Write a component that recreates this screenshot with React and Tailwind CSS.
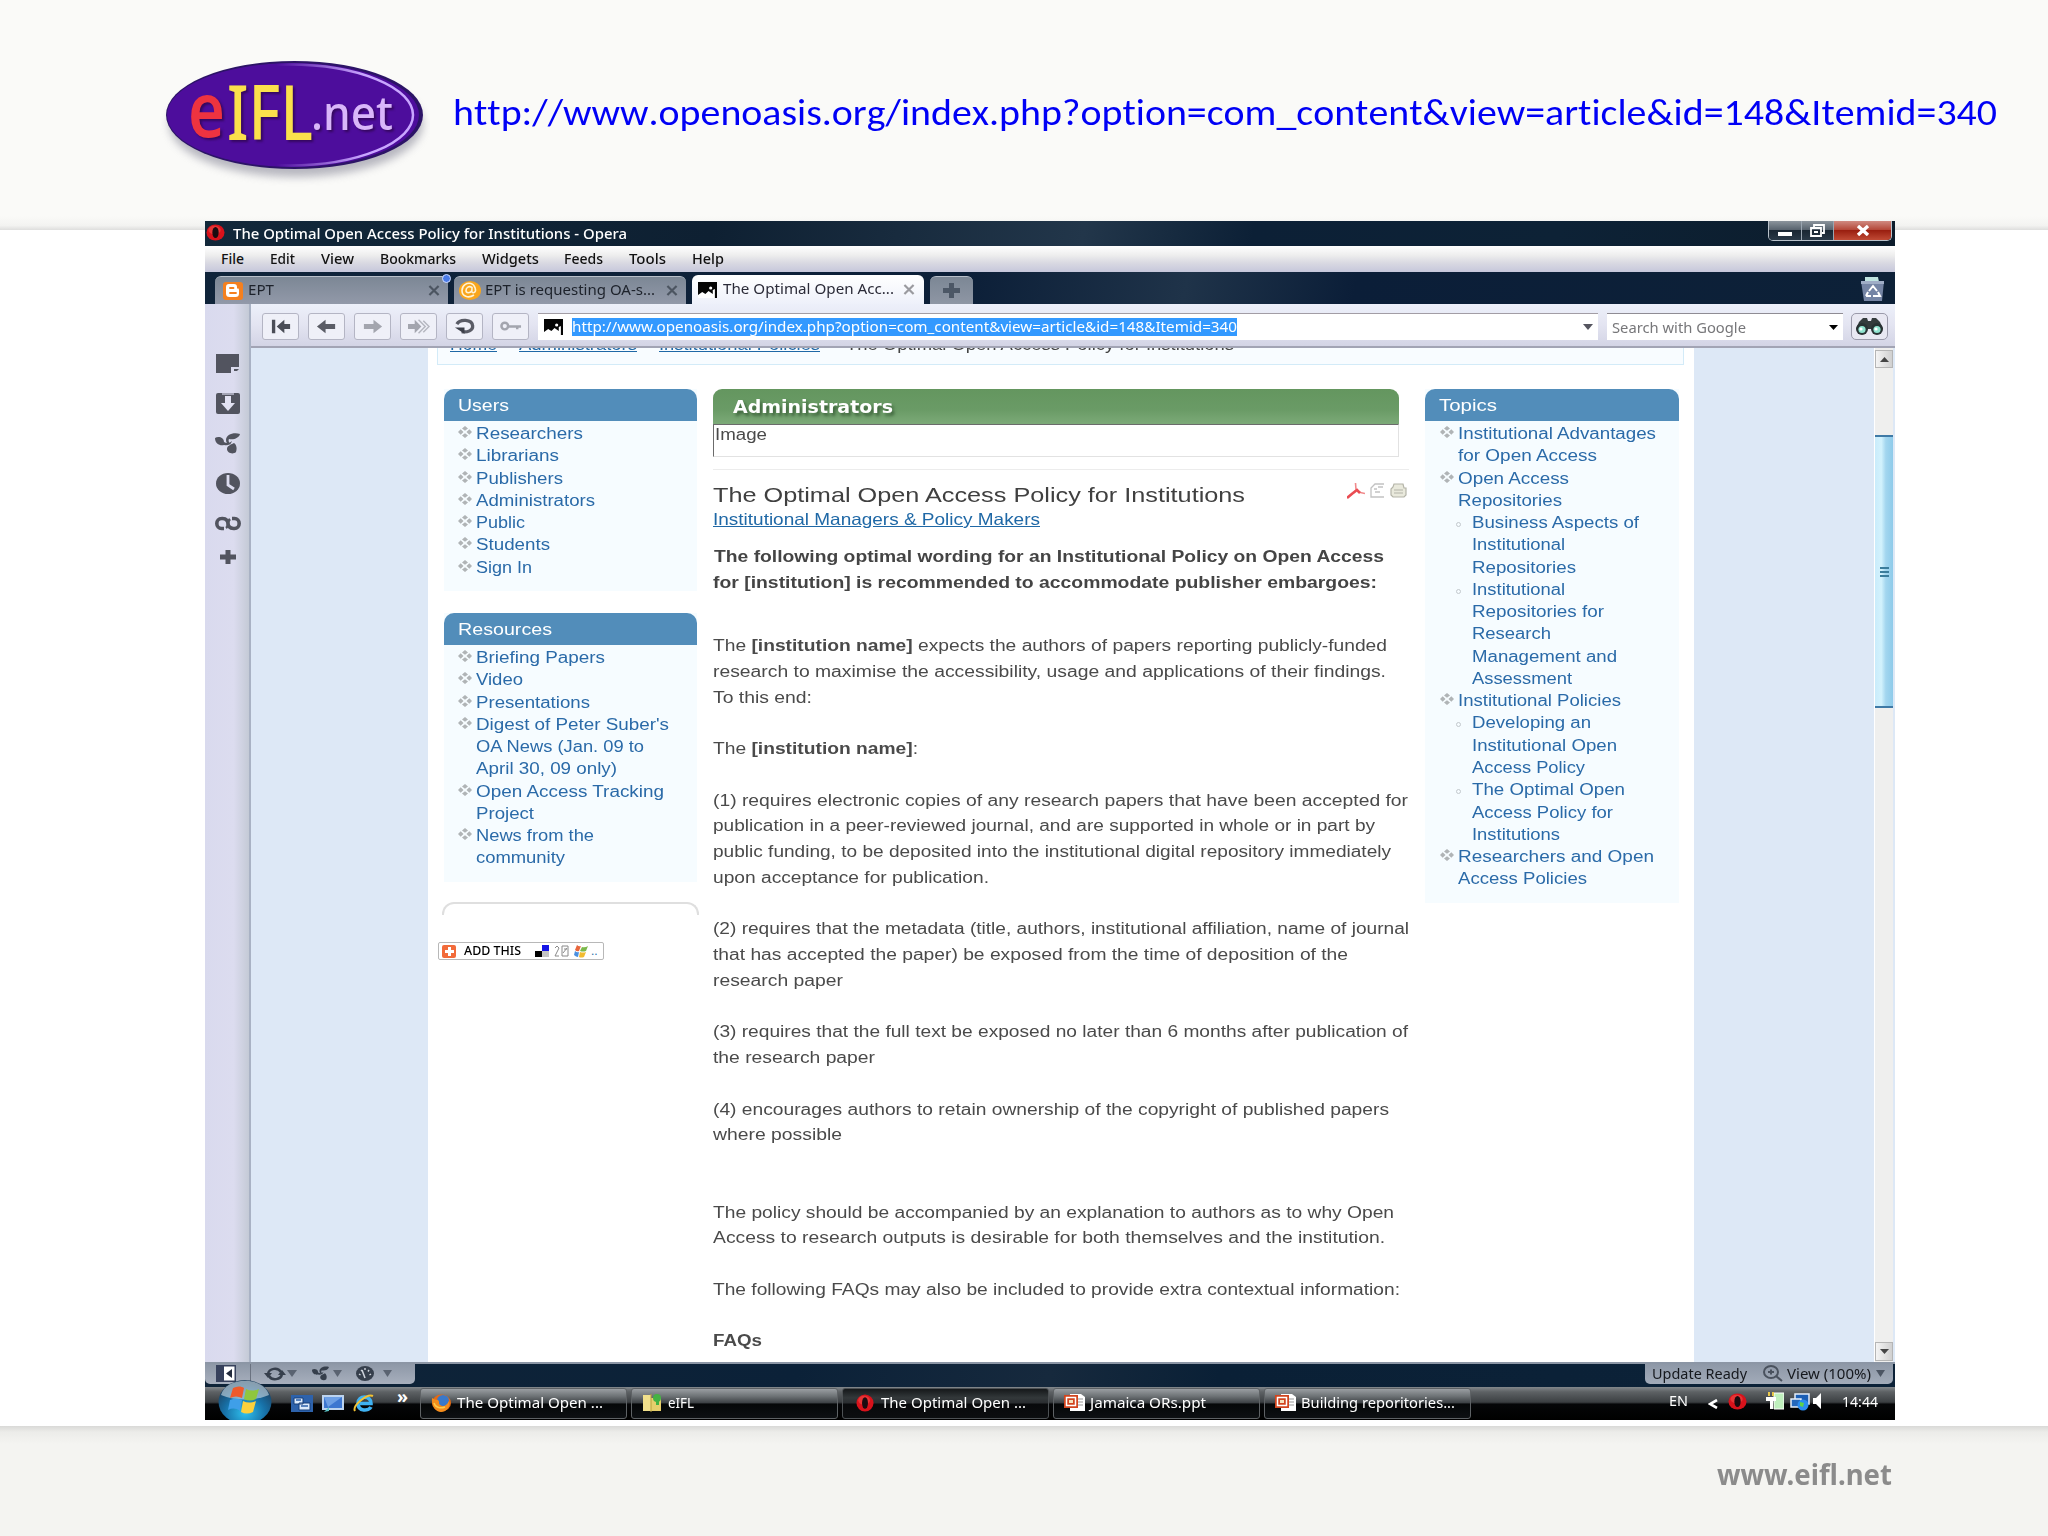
import React, { useLayoutEffect, useRef } from 'react';

// Single line of text stretched horizontally to a fixed width
function Fit({ w, className = '', children }) {
  const ref = useRef(null);

  useLayoutEffect(() => {
    const el = ref.current;
    el.style.transform = 'none';
    const natural = el.getBoundingClientRect().width;
    if (natural > 0) el.style.transform = `scaleX(${w / natural})`;
  }, [w]);

  return (
    <span className={`block shrink-0 ${className}`} style={{ width: w }}>
      <span ref={ref} className="inline-block origin-left whitespace-nowrap align-top">
        {children}
      </span>
    </span>
  );
}

const MENU = [
  ['File', 23, 'ml-4'],
  ['Edit', 25, 'ml-[26px]'],
  ['View', 33, 'ml-[26px]'],
  ['Bookmarks', 76, 'ml-[26px]'],
  ['Widgets', 57, 'ml-[26px]'],
  ['Feeds', 39, 'ml-[25px]'],
  ['Tools', 37, 'ml-[26px]'],
  ['Help', 32, 'ml-[26px]'],
];

// Each item is a list of [line, width]
const USERS = [
  [['Researchers', 107]],
  [['Librarians', 83]],
  [['Publishers', 87]],
  [['Administrators', 119]],
  [['Public', 49]],
  [['Students', 74]],
  [['Sign In', 56]],
];

const RESOURCES = [
  [['Briefing Papers', 129]],
  [['Video', 47]],
  [['Presentations', 114]],
  [["Digest of Peter Suber's", 193], ['OA News (Jan. 09 to', 168], ['April 30, 09 only)', 141]],
  [['Open Access Tracking', 188], ['Project', 58]],
  [['News from the', 118], ['community', 89]],
];

const TOPICS = [
  { lines: [['Institutional Advantages', 198], ['for Open Access', 139]] },
  {
    lines: [['Open Access', 111], ['Repositories', 104]],
    sub: [
      [['Business Aspects of', 167], ['Institutional', 93], ['Repositories', 104]],
      [['Institutional', 93], ['Repositories for', 132], ['Research', 79], ['Management and', 145], ['Assessment', 100]],
    ],
  },
  {
    lines: [['Institutional Policies', 163]],
    sub: [
      [['Developing an', 119], ['Institutional Open', 145], ['Access Policy', 113]],
      [['The Optimal Open', 153], ['Access Policy for', 141], ['Institutions', 88]],
    ],
  },
  { lines: [['Researchers and Open', 196], ['Access Policies', 129]] },
];

const BODY = [
  [<>The <b>[institution name]</b> expects the authors of papers reporting publicly-funded</>, 674],
  ['research to maximise the accessibility, usage and applications of their findings.', 673],
  ['To this end:', 99],
  null,
  [<>The <b>[institution name]</b>:</>, 205],
  null,
  ['(1) requires electronic copies of any research papers that have been accepted for', 695],
  ['publication in a peer-reviewed journal, and are supported in whole or in part by', 662],
  ['public funding, to be deposited into the institutional digital repository immediately', 678],
  ['upon acceptance for publication.', 276],
  null,
  ['(2) requires that the metadata (title, authors, institutional affiliation, name of journal', 696],
  ['that has accepted the paper) be exposed from the time of deposition of the', 635],
  ['research paper', 130],
  null,
  ['(3) requires that the full text be exposed no later than 6 months after publication of', 695],
  ['the research paper', 162],
  null,
  ['(4) encourages authors to retain ownership of the copyright of published papers', 676],
  ['where possible', 129],
  null,
  null,
  ['The policy should be accompanied by an explanation to authors as to why Open', 681],
  ['Access to research outputs is desirable for both themselves and the institution.', 672],
  null,
  ['The following FAQs may also be included to provide extra contextual information:', 687],
  null,
  [<b>FAQs</b>, 49],
];

function Logo() {
  return (
    <svg className="w-[270px] h-[130px] shrink-0" viewBox="0 0 270 130">
      <defs>
        <filter id="soft" x="-10%" y="-10%" width="120%" height="130%">
          <feGaussianBlur stdDeviation="4" />
        </filter>
        <linearGradient id="arc" x1="0.45" x2="0.8" y1="0" y2="0">
          <stop offset="0" stopColor="#c9a6ff" stopOpacity="0" />
          <stop offset="1" stopColor="#c9a6ff" />
        </linearGradient>
      </defs>
      <ellipse cx="136" cy="64" rx="127" ry="53" fill="#8a8a9a" opacity="0.6" filter="url(#soft)" />
      <ellipse cx="134.500" cy="55" rx="128.500" ry="54" fill="#2c1466" />
      <ellipse cx="133" cy="55" rx="126" ry="52" fill="#4d0d9c" />
      <ellipse cx="129" cy="55" rx="124" ry="50.500" fill="none" stroke="url(#arc)" strokeWidth="2.500" />
      <g fontFamily="'Noto Sans', sans-serif" className="[filter:drop-shadow(2px_2px_1px_#35075f)]">
        <text x="28" y="77" fontSize="75" fontWeight="600" fill="#ee3340" textLength="37" lengthAdjust="spacingAndGlyphs">e</text>
        <text x="67" y="80" fontSize="76" fontWeight="500" fill="#fbe04c" textLength="86" lengthAdjust="spacingAndGlyphs">IFL</text>
        <text x="151" y="70" fontSize="48" fontWeight="500" fill="#d9b6fa" textLength="82" lengthAdjust="spacingAndGlyphs">.net</text>
      </g>
    </svg>
  );
}

function OperaIcon({ className }) {
  return (
    <svg className={className} viewBox="0 0 20 20" preserveAspectRatio="none">
      <ellipse cx="10" cy="10" rx="9.500" ry="9.500" fill="#d8121b" />
      <ellipse cx="9" cy="7" rx="6.500" ry="5" fill="#f4564f" opacity="0.5" />
      <ellipse cx="10" cy="10" rx="3.300" ry="6.500" fill="#1a0b10" />
    </svg>
  );
}

function PageIcon({ className }) {
  return (
    <svg className={className} viewBox="0 0 18 16" preserveAspectRatio="none">
      <rect width="18" height="16" fill="#050505" />
      <path d="M0 16V13l4-3 3 2 3-3 4 3V8l2-1v9z" fill="#fff" />
      <circle cx="12" cy="6" r="1.500" fill="#fff" />
    </svg>
  );
}

function CloseX({ className }) {
  return (
    <svg className={className} viewBox="0 0 12 12">
      <path d="M1 1l10 10M11 1L1 11" stroke="currentColor" strokeWidth="2.400" fill="none" />
    </svg>
  );
}

function Caret({ className }) {
  return (
    <svg className={className} viewBox="0 0 10 6" preserveAspectRatio="none">
      <path d="M0 0h10L5 6z" fill="currentColor" />
    </svg>
  );
}

function Bullet() {
  return (
    <svg className="w-[14px] h-3 mt-[3px] mr-1 shrink-0" viewBox="0 0 14 12" fill="#b0b4b6">
      <path d="M7 0l3 2.500-3 2.300-3-2.300zM7 7.200l3 2.300L7 12 4 9.500zM2.700 3.200L5.500 6 2.700 8.800 0 6zM11.300 3.200L14 6l-2.700 2.800L8.500 6z" />
    </svg>
  );
}

function TitleBar() {
  return (
    <div className="h-[25px] flex items-center bg-[linear-gradient(100deg,#12283a_0%,#0e2032_30%,#22364a_52%,#0c2036_62%,#0d2236_80%,#0c1c2b_100%)]">
      <OperaIcon className="w-[19px] h-[17px] ml-px -mt-0.5" />
      <Fit w={394} className="ml-[8px] text-[15px] leading-[25px] text-white font-medium">
        The Optimal Open Access Policy for Institutions - Opera
      </Fit>
      <div className="ml-auto mr-[3px] self-start h-[20px] w-[124px] flex rounded-b-[5px] border border-t-0 border-[#b9c2cb] overflow-hidden">
        <div className="w-[33px] flex items-end justify-center pb-1 border-r border-[#9aa5b0] bg-[linear-gradient(#8b949c_0%,#59646f_45%,#1a2733_50%,#2a3947_100%)]">
          <div className="w-[14px] h-1 bg-white" />
        </div>
        <div className="w-[32px] flex items-center justify-center border-r border-[#9aa5b0] bg-[linear-gradient(#8b949c_0%,#59646f_45%,#1a2733_50%,#2a3947_100%)]">
          <svg className="w-[15px] h-[13px]" viewBox="0 0 15 13" fill="none" stroke="#fff" strokeWidth="1.800">
            <path d="M4 3V1h10v8h-2" />
            <path d="M1 4h10v8H1z" />
            <path d="M4 8h4" />
          </svg>
        </div>
        <div className="flex-1 flex items-center justify-center bg-[linear-gradient(#d08a80_0%,#b5493a_45%,#9a1f10_50%,#c04a35_100%)] text-white">
          <svg className="w-[14px] h-[11px]" viewBox="0 0 14 11" stroke="#fff" strokeWidth="3.400" fill="none">
            <path d="M2 1l10 9M12 1L2 10" />
          </svg>
        </div>
      </div>
    </div>
  );
}

function MenuBar() {
  return (
    <div className="h-[26px] flex items-center text-[14px] leading-[26px] text-[#111] font-medium bg-[linear-gradient(#ffffff_0%,#eeeeee_35%,#d9d9e2_65%,#c6c7db_100%)]">
      {MENU.map(([label, w, margin]) => (
        <Fit key={label} w={w} className={margin}>{label}</Fit>
      ))}
    </div>
  );
}

function TabBar() {
  return (
    <div className="h-[32px] flex items-end text-[14px] leading-[26px] bg-[linear-gradient(100deg,#10243a_0%,#0c1f38_45%,#1f3349_58%,#0b1e38_68%,#0d2138_100%)]">
      <div className="relative ml-[10px] w-[233px] h-[28px] flex items-center rounded-t-[6px] border-t border-[#b9c0ca] bg-[linear-gradient(#7c8795,#9299a9)] text-[#1d222b]">
        <div className="ml-[8px] w-[20px] h-[18px] rounded-[3px] bg-[#f5801f] flex items-center justify-center">
          <svg className="w-[14px] h-[13px]" viewBox="0 0 14 13">
            <path d="M3 0h5a3 3 0 013 3v1.500h1.500L13 6v3.500A3.500 3.500 0 019.500 13h-6A3.500 3.500 0 010 9.500V3a3 3 0 013-3z" fill="#fff" />
            <path d="M4 4h3.500M4 9h6" stroke="#f5801f" strokeWidth="1.800" strokeLinecap="round" />
          </svg>
        </div>
        <Fit w={26} className="ml-[5px] h-[28px]">EPT</Fit>
        <CloseX className="ml-auto mr-[8px] w-3 h-[11px] text-[#4c5561]" />
        <div className="absolute -right-[3px] -top-[3px] w-[9px] h-[9px] rounded-full bg-[#4a7be8] border border-[#cfdcff]" />
      </div>
      <div className="ml-[6px] w-[232px] h-[28px] flex items-center rounded-t-[6px] border-t border-[#b9c0ca] bg-[linear-gradient(#7c8795,#9299a9)] text-[#1d222b]">
        <svg className="ml-[5px] w-[22px] h-[19px]" viewBox="0 0 22 19">
          <ellipse cx="11" cy="9.500" rx="11" ry="9.500" fill="#f9a61c" />
          <path d="M15 14c-6 4-12 1-12-4.500S8 1.500 12 2.500s6 8 3 9-2-2-2-5c-3-2-6 0-6 3s4 3 6 0" fill="none" stroke="#fff3d6" strokeWidth="1.600" />
        </svg>
        <Fit w={170} className="ml-1 h-[28px]">EPT is requesting OA-s...</Fit>
        <CloseX className="ml-auto mr-[8px] w-3 h-[11px] text-[#4c5561]" />
      </div>
      <div className="ml-[6px] w-[232px] h-[29px] flex items-center rounded-t-[6px] bg-[linear-gradient(#ffffff,#eef1fa)] text-[#2b2b38]">
        <PageIcon className="ml-[6px] w-[19px] h-[16px]" />
        <Fit w={171} className="ml-[6px] h-[28px]">The Optimal Open Acc...</Fit>
        <CloseX className="ml-auto mr-[9px] w-3 h-[11px] text-[#9a9a9f]" />
      </div>
      <div className="ml-[6px] w-[43px] h-[28px] flex items-center justify-center rounded-t-[6px] border-t border-[#b9c0ca] bg-[linear-gradient(#7c8795,#8e96a4)]">
        <svg className="w-[17px] h-[15px]" viewBox="0 0 17 15">
          <path d="M6 0h5v5h6v5h-6v5H6v-5H0V5h6z" fill="#4c5766" />
        </svg>
      </div>
      <svg className="ml-auto mr-[11px] mb-[3px] w-[23px] h-[25px]" viewBox="0 0 23 25">
        <path d="M4 1h13l1 5H4z" fill="#bfe3e0" />
        <path d="M0 5h23l-2 20H3z" fill="#7585a5" />
        <path d="M0 5h23v3H0z" fill="#9fadc6" />
        <path d="M8 15l4-5 4 5M5 20h5M7 16l-2 4M17 16l2 4h-7" stroke="#fff" strokeWidth="2" fill="none" />
      </svg>
    </div>
  );
}

const NAV_ICONS = [
  <g key="start" fill="#4a4d57"><path d="M2 1h3.500v14H2zM7 8l8-7v4.500h6v5h-6V15z" /></g>,
  <path key="back" d="M1 8l9-7v4.500h10v5H10V15z" fill="#5a5c66" />,
  <path key="fwd" d="M21 8l-9-7v4.500H2v5h10V15z" fill="#a3a5ae" />,
  <g key="ffwd" fill="#a3a5ae"><path d="M14 8L7 1v4.500H0v5h7V15z" /><path d="M11 1l7 7-7 7M16 2l6 6-6 6" fill="none" stroke="#b4b6bf" strokeWidth="1.500" /></g>,
  <g key="reload"><path d="M3 5.500C6 0 19 0 19.500 7.500 20 12 14 14.500 8 13.500" fill="none" stroke="#5a5c66" strokeWidth="3.400" /><path d="M1 9h10v6.500z" fill="#3d404a" /></g>,
  <g key="wand" fill="none" stroke="#a3a5ae" strokeWidth="2.600"><circle cx="5" cy="7.500" r="3.500" /><path d="M9 8h13M18 8v3" /></g>,
];

function Toolbar() {
  return (
    <div className="h-[44px] pl-[11px] flex items-start pt-[9px] border-b-2 border-[#a2a4b4] bg-[linear-gradient(#edf0fa,#e3e4f1_50%,#d3d4e5)] text-[14px]">
      <div className="flex gap-[9px]">
        {NAV_ICONS.map((icon, i) => (
          <div key={i} className="w-[37px] h-[27px] rounded-[3px] border border-[#b4b5c4] bg-[#eff0f8] flex items-center justify-center">
            <svg className="w-[22px] h-[17px]" viewBox="0 0 23 16">{icon}</svg>
          </div>
        ))}
      </div>
      <div className="ml-[9px] w-[1060px] h-[27px] flex items-center bg-white border-t border-[#a29da5]">
        <PageIcon className="ml-[6px] w-[19px] h-[16px]" />
        <div className="ml-[9px] h-[18px] bg-[#3399ff] text-white leading-[18px]">
          <Fit w={665}>http://www.openoasis.org/index.php?option=com_content&amp;view=article&amp;id=148&amp;Itemid=340</Fit>
        </div>
        <Caret className="ml-auto mr-[5px] w-[10px] h-[6px] text-[#55555f]" />
      </div>
      <div className="ml-[9px] w-[236px] h-[27px] flex items-center bg-white border-t border-[#8f8c94]">
        <Fit w={134} className="ml-[5px] leading-[27px] text-[#77777a]">Search with Google</Fit>
        <Caret className="ml-auto mr-[5px] w-[9px] h-[5px] text-black" />
      </div>
      <div className="ml-[8px] w-[37px] h-[27px] rounded-[5px] border border-[#9a9aaa] bg-[#e8e8f2] flex items-center justify-center">
        <svg className="w-[29px] h-[19px]" viewBox="0 0 29 19">
          <path d="M4 5l4-4h4l1 3h3l1-3h4l4 4 3 7H1z" fill="#333b3c" />
          <circle cx="7" cy="12" r="6" fill="#283233" />
          <circle cx="22" cy="12" r="6" fill="#283233" />
          <circle cx="7" cy="12.500" r="3.600" fill="#8fe3cf" />
          <circle cx="22" cy="12.500" r="3.600" fill="#8fe3cf" />
          <circle cx="6" cy="12" r="1.600" fill="#fff" />
          <circle cx="21" cy="12" r="1.600" fill="#fff" />
        </svg>
      </div>
    </div>
  );
}

function SidePanel() {
  return (
    <div className="w-[46px] shrink-0 flex flex-col items-center pt-[50px] pl-px border-r-2 border-[#a9b2c4] bg-[linear-gradient(90deg,#d9daee_0%,#dcdcef_65%,#c4cad6_100%)] text-[#52545f]">
      <svg className="w-[23px] h-[20px]" viewBox="0 0 23 20" fill="currentColor">
        <path d="M0 0h23v13h-8v6H0zM18 15h5l-2 2h-3z" />
      </svg>
      <svg className="w-[24px] h-[21px] mt-[19px]" viewBox="0 0 24 21">
        <path d="M0 2Q0 0 2 0h20q2 0 2 2v17q0 2-2 2H2q-2 0-2-2z" fill="currentColor" />
        <path d="M9 3h6v7h4l-7 8-7-8h4z" fill="#e2e2f2" />
        <path d="M6 0h12v2H6z" fill="#dcdcef" opacity="0.6" />
      </svg>
      <svg className="w-[25px] h-[21px] mt-[19px]" viewBox="0 0 25 21" fill="currentColor">
        <path d="M11 7C11 2 18-1 25 1c-1 4-6 6-11 5-1 2 0 4 2 5-3 1-5-1-5-4z" />
        <path d="M0 5c3-2 9-1 9 4 3 2 6 1 8-1-1 4-5 5-8 4-4 1-9-1-9-7z" />
        <path d="M12 16c0-3 3-4 7-6 3 2 3 6 2 9-3 3-9 1-9-3z" />
      </svg>
      <svg className="w-[24px] h-[21px] mt-[19px]" viewBox="0 0 24 21">
        <ellipse cx="12" cy="10.500" rx="12" ry="10.500" fill="currentColor" />
        <path d="M12 2v10l6 4" stroke="#dcdcef" strokeWidth="2.800" fill="none" />
      </svg>
      <svg className="w-[26px] h-[15px] mt-[22px]" viewBox="0 0 26 15" fill="none" stroke="currentColor" strokeWidth="3.600">
        <path d="M9 12.500H6.500a4.500 4.800 0 010-10C12 2 13 6 13 7.500s1 5.500 6.500 5a4.500 4.800 0 000-10H17" />
        <path d="M11 12c1.500-1 2-3 2-4.500S14 4 15 3" strokeWidth="2.500" />
      </svg>
      <svg className="w-[16px] h-[14px] mt-[19px]" viewBox="0 0 16 14" fill="currentColor">
        <path d="M5.500 0h5v4.500H16v5h-5.500V14h-5V9.500H0v-5h5.500z" />
      </svg>
    </div>
  );
}

function BoxHeader({ w, children }) {
  return (
    <div className="h-[32px] pl-[14px] rounded-t-[10px] bg-[#528dba] text-white text-[17px] leading-[33px]">
      <Fit w={w}>{children}</Fit>
    </div>
  );
}

function Lines({ lines }) {
  return (
    <div>
      {lines.map(([text, w], i) => (
        <Fit key={i} w={w} className="h-[22.270px]">{text}</Fit>
      ))}
    </div>
  );
}

function LinkBox({ title, titleWidth, items, className }) {
  return (
    <div className={className}>
      <BoxHeader w={titleWidth}>{title}</BoxHeader>
      <ul className="pt-[2px] pl-[14px]">
        {items.map((lines) => (
          <li key={lines[0][0]} className="flex">
            <Bullet />
            <Lines lines={lines} />
          </li>
        ))}
      </ul>
    </div>
  );
}

function AddThis() {
  return (
    <div className="-ml-[6px] mt-[27px] w-[166px] h-[18px] flex items-center rounded-[2px] border border-[#b8b8b8] bg-white">
      <div className="ml-[3px] w-[14px] h-[13px] rounded-[2px] bg-[#f26b3a] flex items-center justify-center">
        <svg className="w-[9px] h-[9px]" viewBox="0 0 9 9"><path d="M3 0h3v3h3v3H6v3H3V6H0V3h3z" fill="#fff" /></svg>
      </div>
      <Fit w={57} className="ml-[8px] text-[12px] leading-[16px] text-black font-medium font-['Noto_Sans',sans-serif]">ADD THIS</Fit>
      <svg className="ml-[14px] w-[14px] h-[12px]" viewBox="0 0 14 12">
        <path d="M7 0h7v6H7z" fill="#1414e6" />
        <path d="M0 6h7v6H0z" fill="#000" />
        <path d="M7 6h7v6H7z" fill="#c4c4c4" />
      </svg>
      <svg className="ml-[5px] w-[15px] h-[12px]" viewBox="0 0 15 12" fill="none" stroke="#8a8a8a">
        <path d="M1 3l2-2 2 2-4 8h4M8 1h6v10H8zM9 8l4-5M10 4h3" />
      </svg>
      <svg className="ml-[5px] w-[14px] h-[13px]" viewBox="0 0 14 13">
        <path d="M3 0q2 2 4 1L5 6Q3 7 1 5z" fill="#e8663c" />
        <path d="M8 2q3 1 6-1l-2 5q-3 1-6 0z" fill="#7bb84a" />
        <path d="M1 6q2 2 4 1l-1 5q-2 0-4-2z" fill="#4a8fe0" />
        <path d="M6 7q3 1 6 0l-2 5q-3 1-5 0z" fill="#f2bb2f" />
      </svg>
      <span className="ml-[3px] text-[12px] leading-[16px]">..</span>
    </div>
  );
}

function Article() {
  return (
    <div className="ml-[16px] w-[696px] text-[#4a4a4a]">
      <div className="w-[686px] h-[35px] pl-[20px] rounded-t-[9px] bg-[linear-gradient(#64965f,#6a9b66_60%,#7caa78)] text-white text-[17px] leading-[36px] font-bold font-['DejaVu_Sans',sans-serif] [text-shadow:2px_3px_3px_rgba(30,60,30,0.6)]">
        <Fit w={160}>Administrators</Fit>
      </div>
      <div className="w-[686px] h-[33px] pl-[1px] border border-t-[#6b6b6b] border-l-[#6b6b6b] border-[#e2e2e2] leading-[20px] overflow-hidden">
        <Fit w={52}>Image</Fit>
      </div>
      <div className="mt-[12px] h-px bg-[#ececec]" />
      <div className="mt-[11px] h-[28px] flex items-start text-[21px] leading-[28px] text-[#404040]">
        <Fit w={532}>The Optimal Open Access Policy for Institutions</Fit>
        <div className="ml-auto mr-[2px] flex gap-[5px] mt-[2px]">
          <svg className="w-[18px] h-[16px]" viewBox="0 0 18 16" fill="none">
            <path d="M8.500 0L9 6.500M9 7l-2 3M11 9l7 1.500" stroke="#f08a8c" strokeWidth="1.600" />
            <path d="M0 15l6-5M6 10l4-3 3 3" stroke="#ea4c52" strokeWidth="2.600" />
          </svg>
          <svg className="w-[15px] h-[15px]" viewBox="0 0 15 15" fill="none" stroke="#c2c2c2" strokeWidth="1.300">
            <path d="M14 1H5L1 5v9h13M4 6h3M5 9h5M8 4h5" />
          </svg>
          <svg className="w-[17px] h-[15px]" viewBox="0 0 17 15" fill="#e9e9dc" stroke="#b4b4a8" strokeWidth="1.200">
            <path d="M4 1h9l1 4h2v7l-2 2H3l-2-2V6l2-2z" />
            <path d="M4 7h9M4 10h9" />
          </svg>
        </div>
      </div>
      <div className="h-[22px] mt-[-1px] text-[16.500px] leading-[22px] text-[#1f68a6]">
        <Fit w={327} className="[&>span]:underline">Institutional Managers &amp; Policy Makers</Fit>
      </div>
      <div className="mt-[14px] font-bold leading-[25.750px] text-[#444]">
        <Fit w={670} className="ml-[1px] h-[25.750px]">The following optimal wording for an Institutional Policy on Open Access</Fit>
        <Fit w={664} className="h-[25.750px]">for [institution] is recommended to accommodate publisher embargoes:</Fit>
      </div>
      <div className="mt-[37.500px] leading-[25.750px]">
        {BODY.map((line, i) =>
          line ? (
            <Fit key={i} w={line[1]} className="h-[25.750px]">{line[0]}</Fit>
          ) : (
            <div key={i} className="h-[25.750px]" />
          )
        )}
      </div>
    </div>
  );
}

function Topics() {
  return (
    <div className="ml-[16px] w-[254px] h-[514px] bg-[#f6fcff]">
      <BoxHeader w={58}>Topics</BoxHeader>
      <ul className="pt-[2px] pl-[15px]">
        {TOPICS.map(({ lines, sub }) => (
          <li key={lines[0][0]}>
            <div className="flex">
              <Bullet />
              <Lines lines={lines} />
            </div>
            {sub && (
              <ul className="pl-[16px]">
                {sub.map((subLines) => (
                  <li key={subLines[0][0]} className="flex">
                    <span className="w-[5px] h-[5px] mt-[10px] mr-[11px] rounded-full border border-[#c3c9cd] shrink-0" />
                    <Lines lines={subLines} />
                  </li>
                ))}
              </ul>
            )}
          </li>
        ))}
      </ul>
    </div>
  );
}

function Page() {
  return (
    <div className="flex-1 flex min-h-0 overflow-hidden bg-[#dde8f6] font-['Liberation_Sans',sans-serif] text-[16px]">
      <div className="ml-[177px] w-[1266px] bg-white">
        <div className="ml-[9px] w-[1247px] h-[17px] overflow-hidden border border-t-0 border-[#d3ebf8] bg-[#f8fcff]">
          <div className="-mt-[13px] h-[20px] pl-[12px] flex leading-[20px] text-[#1f68a6]">
            <Fit w={47} className="[&>span]:underline">Home</Fit>
            <Fit w={118} className="ml-[22px] [&>span]:underline">Administrators</Fit>
            <Fit w={161} className="ml-[22px] [&>span]:underline">Institutional Policies</Fit>
            <Fit w={388} className="ml-[26px] text-[#444]">The Optimal Open Access Policy for Institutions</Fit>
          </div>
        </div>
        <div className="mt-[24px] ml-[16px] flex items-start">
          <div className="w-[253px] leading-[22.270px] text-[#2a6aa8]">
            <LinkBox title="Users" titleWidth={51} items={USERS} className="h-[202px] bg-[#f6fcff]" />
            <LinkBox title="Resources" titleWidth={94} items={RESOURCES} className="mt-[22px] h-[269px] bg-[#f6fcff]" />
            <div className="-mx-[2px] mt-[20px] h-[13px] rounded-t-[12px] border-2 border-b-0 border-[#dfdfdf]" />
            <AddThis />
          </div>
          <Article />
          <div className="leading-[22.270px] text-[#2a6aa8]">
            <Topics />
          </div>
        </div>
      </div>
      <div className="ml-auto mr-[2px] w-[19px] flex flex-col bg-[#efefee] border-l border-white">
        <div className="mt-[2px] h-[18px] flex items-center justify-center border border-[#b5b5b5] bg-[linear-gradient(90deg,#f4f4f4,#d0d0d0)]">
          <Caret className="w-[9px] h-[5px] rotate-180 text-[#444]" />
        </div>
        <div className="mt-[67px] h-[273px] flex flex-col gap-[2px] items-center justify-center border-y-2 border-[#3f7aa6] bg-[linear-gradient(90deg,#c9ecfb_0%,#d3f2fd_35%,#a3d6ef_60%,#8ecbea_100%)]">
          <div className="w-[9px] h-[2px] bg-[#3b7d9c]" />
          <div className="w-[9px] h-[2px] bg-[#3b7d9c]" />
          <div className="w-[9px] h-[2px] bg-[#3b7d9c]" />
        </div>
        <div className="mt-auto mb-[1px] h-[19px] flex items-center justify-center border border-[#b5b5b5] bg-[linear-gradient(90deg,#f4f4f4,#d0d0d0)]">
          <Caret className="w-[9px] h-[5px] text-[#444]" />
        </div>
      </div>
    </div>
  );
}

function StatusBar() {
  return (
    <div className="h-[25px] flex items-start justify-between border-t-2 border-[#8c96a5] text-[14px] leading-[18px] text-[#15181d] bg-[linear-gradient(100deg,#0f2438_0%,#0b2138_35%,#16293d_50%,#0a2036_60%,#0c2238_100%)]">
      <div className="w-[210px] h-[20px] pb-px flex items-center rounded-b-[5px] bg-[linear-gradient(#8e98a7,#a7afbd)]">
        <svg className="ml-[11px] w-[20px] h-[17px]" viewBox="0 0 20 17">
          <path d="M0 0h20v17H0z" fill="#37415c" />
          <path d="M8 1.500h10.500v14H8z" fill="#fff" />
          <path d="M16 4v9l-6-4.500z" fill="#222a3c" />
        </svg>
        <div className="ml-[14px] w-px h-full bg-[#6a7280]" />
        <svg className="ml-[13px] w-[22px] h-[14px]" viewBox="0 0 22 14" fill="none" stroke="#363f4c" strokeWidth="2.500">
          <path d="M4 7c1-6 10-7 13-2M18 7c-1 6-10 7-13 2" />
          <path d="M0 6h8l-4 5zM14 8h8l-4-5z" fill="#363f4c" stroke="none" />
        </svg>
        <Caret className="ml-[1px] w-[10px] h-[7px] text-[#5a6371]" />
        <svg className="ml-[15px] w-[17px] h-[15px]" viewBox="0 0 25 21" fill="#363f4c">
          <path d="M11 7C11 2 18-1 25 1c-1 4-6 6-11 5-1 2 0 4 2 5-3 1-5-1-5-4z" />
          <path d="M0 5c3-2 9-1 9 4 3 2 6 1 8-1-1 4-5 5-8 4-4 1-9-1-9-7z" />
          <path d="M12 16c0-3 3-4 7-6 3 2 3 6 2 9-3 3-9 1-9-3z" />
        </svg>
        <Caret className="ml-[4px] w-[9px] h-[7px] text-[#5a6371]" />
        <svg className="ml-[14px] w-[18px] h-[15px]" viewBox="0 0 18 15">
          <ellipse cx="9" cy="7.500" rx="9" ry="7.500" fill="#363f4c" />
          <path d="M9 12L6 4" stroke="#cfd4dc" strokeWidth="1.600" />
          <path d="M3 8l1.500 1M5 4l1 1M9 2v2M13 4l-1 1.500M15 8l-1.500 1" stroke="#cfd4dc" strokeWidth="1.400" />
        </svg>
        <Caret className="ml-[9px] w-[9px] h-[7px] text-[#5a6371]" />
      </div>
      <div className="mr-[2px] w-[248px] h-[20px] pb-px flex items-center rounded-b-[5px] bg-[linear-gradient(#8e98a7,#a2abb9)]">
        <Fit w={95} className="ml-[7px]">Update Ready</Fit>
        <svg className="ml-[16px] w-[20px] h-[17px]" viewBox="0 0 20 17" fill="none" stroke="#4a525e" strokeWidth="2">
          <ellipse cx="8" cy="7" rx="7" ry="6" />
          <path d="M13 11l6 5M5 7h6M8 4.500v5" />
        </svg>
        <Fit w={84} className="ml-[4px]">View (100%)</Fit>
        <Caret className="ml-[5px] w-[9px] h-[7px] text-[#4c5563]" />
      </div>
    </div>
  );
}

function TaskButton({ icon, label, w, active }) {
  return (
    <div
      className={
        active
          ? 'w-[207px] h-[31px] pl-[2px] flex items-center rounded-[3px] border border-[#4d5154] bg-[linear-gradient(#15181a_0%,#33383a_30%,#2a2d30_48%,#08090b_52%,#0c0e10_100%)]'
          : 'w-[207px] h-[31px] flex items-center rounded-[3px] border border-[#5e6265] bg-[linear-gradient(#9a9ea2_0%,#6d7275_25%,#3e4246_47%,#050708_52%,#0d1013_100%)]'
      }
    >
      <div className="ml-[9px] -mt-[2px] w-[22px] flex justify-center">{icon}</div>
      <Fit w={w} className="ml-[5px] text-[14.500px] leading-[26px] h-[29px] text-white">{label}</Fit>
    </div>
  );
}

function FirefoxIcon() {
  return (
    <svg className="w-[21px] h-[18px]" viewBox="0 0 21 18">
      <ellipse cx="10.500" cy="9" rx="9.500" ry="8.500" fill="#e66a12" />
      <ellipse cx="12" cy="6.500" rx="6" ry="5.500" fill="#3a78c9" />
      <path d="M1 4c2 1 3 2 6 2 2 2 0 3 2 5s6 2 9-4c2 6-3 11-8 11S0 12 1 4z" fill="#f58d1c" />
      <path d="M3 9c1 4 6 6 11 4" stroke="#ffcb4a" strokeWidth="1.500" fill="none" />
    </svg>
  );
}

function FolderIcon() {
  return (
    <svg className="w-[20px] h-[18px]" viewBox="0 0 20 18">
      <path d="M1 1h8v16H1z" fill="#f0df8b" />
      <path d="M9 4h10v13H9z" fill="#e6cf6c" />
      <path d="M9 0v18" stroke="#b99f3d" />
      <circle cx="15" cy="4" r="4" fill="#44b243" />
      <path d="M14 5h3v6h-3z" fill="#44b243" />
    </svg>
  );
}

function PptIcon() {
  return (
    <svg className="w-[21px] h-[17px]" viewBox="0 0 21 17">
      <path d="M6 0h11l4 3v14H6z" fill="#fff" />
      <path d="M14 5h5M14 8h5M14 11h5" stroke="#999" />
      <path d="M0 1h14v13H0z" fill="#d2451e" />
      <path d="M2.500 3.500h9v8h-9z" fill="none" stroke="#fff" strokeWidth="1.500" />
      <path d="M5 6h4v3H5z" fill="#f5e3c0" />
    </svg>
  );
}

function TaskBar() {
  return (
    <div className="relative h-[33px] flex items-end bg-[linear-gradient(#83888c_0%,#5d6164_15%,#3b3f42_46%,#050608_52%,#000_100%)] text-white">
      {/* Start orb rises above the bar */}
      <svg className="absolute left-[13px] -top-[7px] w-[54px] h-[40px]" viewBox="0 0 54 40">
        <defs>
          <radialGradient id="orb" cx="0.5" cy="0.75" r="0.7">
            <stop offset="0" stopColor="#2fc0ee" />
            <stop offset="0.55" stopColor="#1771a8" />
            <stop offset="1" stopColor="#1c3f5e" />
          </radialGradient>
        </defs>
        <ellipse cx="27" cy="22" rx="26.500" ry="22" fill="url(#orb)" />
        <path d="M3 15C8-4 46-4 51 15c-14 6-34 6-48 0z" fill="#cfdde6" opacity="0.6" />
        <path d="M15 8c4-2 8-2 11 0l-2 10c-4-2-8-2-12 0z" fill="#ee5a2c" />
        <path d="M28 9c4 2 8 2 13 0l-3 10c-4 2-8 2-12 0z" fill="#8fc73e" />
        <path d="M12 20c4-2 8-2 12 0l-2 11c-4-3-8-3-12-1z" fill="#3f9fe8" />
        <path d="M25 21c4 2 8 2 13 0l-3 11c-4 2-8 2-12 0z" fill="#fdd03c" />
      </svg>
      <div className="ml-[86px] mb-[7px] flex items-center gap-[9px]">
        <svg className="w-[22px] h-[17px]" viewBox="0 0 22 17">
          <path d="M0 0h22v17H0z" fill="#2d62ab" />
          <path d="M3 3h9v6H3zM8 8h11v7H8z" fill="#dcebfb" stroke="#173f7a" />
          <path d="M10 11h7M5 5h5" stroke="#2d62ab" strokeWidth="1.500" />
        </svg>
        <svg className="w-[22px] h-[17px]" viewBox="0 0 22 17">
          <path d="M0 0h22v15H0z" fill="#bcd3ee" />
          <path d="M2 2h18v11H2z" fill="#3c76d0" />
          <path d="M2 2h18L6 12z" fill="#6d9fe4" />
          <path d="M2 17l5-5v4z" fill="#5cc5c7" />
        </svg>
        <svg className="w-[22px] h-[19px]" viewBox="0 0 22 19" fill="none">
          <path d="M18 13c-2 4-13 5-13-3.500S18 1 18 9.500H7" stroke="#3fb2f2" strokeWidth="3.600" />
          <path d="M2 17C-1 12 14-1 20 2" stroke="#f2c232" strokeWidth="2" />
        </svg>
      </div>
      <div className="ml-[22px] mb-[13px] text-[18px] leading-[22px] font-bold">»</div>
      <div className="absolute left-[215px] bottom-[1px] flex gap-[4px]">
        <TaskButton icon={<FirefoxIcon />} label="The Optimal Open ..." w={146} />
        <TaskButton icon={<FolderIcon />} label="eIFL" w={26} />
        <TaskButton icon={<OperaIcon className="w-[18px] h-[18px]" />} label="The Optimal Open ..." w={145} active />
        <TaskButton icon={<PptIcon />} label="Jamaica ORs.ppt" w={116} />
        <TaskButton icon={<PptIcon />} label="Building reporitories..." w={154} />
      </div>
      <div className="ml-auto mr-[17px] h-[33px] flex items-center text-[14px] leading-[28px]">
        <Fit w={19} className="-mt-[6px]">EN</Fit>
        <svg className="ml-[20px] w-[10px] h-[10px]" viewBox="0 0 10 10" fill="none" stroke="#fff" strokeWidth="2.600">
          <path d="M9 1L2 5l7 4" />
        </svg>
        <OperaIcon className="ml-[10px] -mt-[5px] w-[19px] h-[17px]" />
        <svg className="ml-[19px] -mt-[5px] w-[18px] h-[18px]" viewBox="0 0 18 18">
          <path d="M8 1h10v16H8z" fill="#bff0bd" stroke="#fff" />
          <path d="M0 5h10v4H7v8H4V9H0z" fill="#fff" />
          <path d="M2 0h2v4H2zM6 0h2v4H6z" fill="#e9c84b" />
        </svg>
        <svg className="ml-[6px] -mt-[4px] w-[20px] h-[18px]" viewBox="0 0 20 18">
          <path d="M5 1h14v10H5z" fill="#1c5fb5" stroke="#e5eefa" strokeWidth="1.500" />
          <path d="M1 6h10v8H1z" fill="#2468bd" stroke="#e5eefa" strokeWidth="1.500" />
          <circle cx="13" cy="12" r="5.500" fill="#2a8df0" />
          <path d="M10 9l4 1-1 4-3-1z" fill="#5fd24a" />
        </svg>
        <svg className="ml-[3px] -mt-[5px] w-[10px] h-[16px]" viewBox="0 0 10 16">
          <path d="M0 5h3l5-5v16l-5-5H0z" fill="#fff" />
        </svg>
        <Fit w={36} className="ml-[19px] -mt-[3px]">14:44</Fit>
      </div>
    </div>
  );
}

export default function App() {
  return (
    <div className="w-[2048px] h-[1536px] overflow-hidden flex flex-col bg-white font-['Noto_Sans',sans-serif]">
      <header className="h-[230px] shrink-0 flex items-start pt-[60px] pl-[160px] bg-[linear-gradient(#fafaf8_0%,#fafaf8_94%,#f3f3f1_98%,#dededd_100%)]">
        <Logo />
        <div className="ml-[23px] mt-[28px] text-[36px] leading-[50px] text-[#0000f5] font-['Carlito','Lato',sans-serif] [font-variant-ligatures:none] [font-kerning:none]">
          <Fit w={1544}>http://www.openoasis.org/index.php?option=com_content&amp;view=article&amp;id=148&amp;Itemid=340</Fit>
        </div>
      </header>

      {/* Browser window overlaps the header edge */}
      <main className="relative -mt-[9px] ml-[205px] w-[1690px] h-[1199px] shrink-0 flex flex-col">
        <TitleBar />
        <MenuBar />
        <TabBar />
        <div className="flex-1 flex min-h-0">
          <SidePanel />
          <div className="flex-1 min-w-0 flex flex-col">
            <Toolbar />
            <Page />
          </div>
        </div>
        <StatusBar />
        <TaskBar />
      </main>

      <footer className="mt-[6px] flex-1 bg-[linear-gradient(#d9d9d7_0px,#ecece9_6px,#f4f4f1_18px)] flex justify-end pr-[156px] pt-[29px]">
        <Fit w={175} className="text-[28px] leading-[38px] font-bold text-[#8b8b8b]">www.eifl.net</Fit>
      </footer>
    </div>
  );
}
